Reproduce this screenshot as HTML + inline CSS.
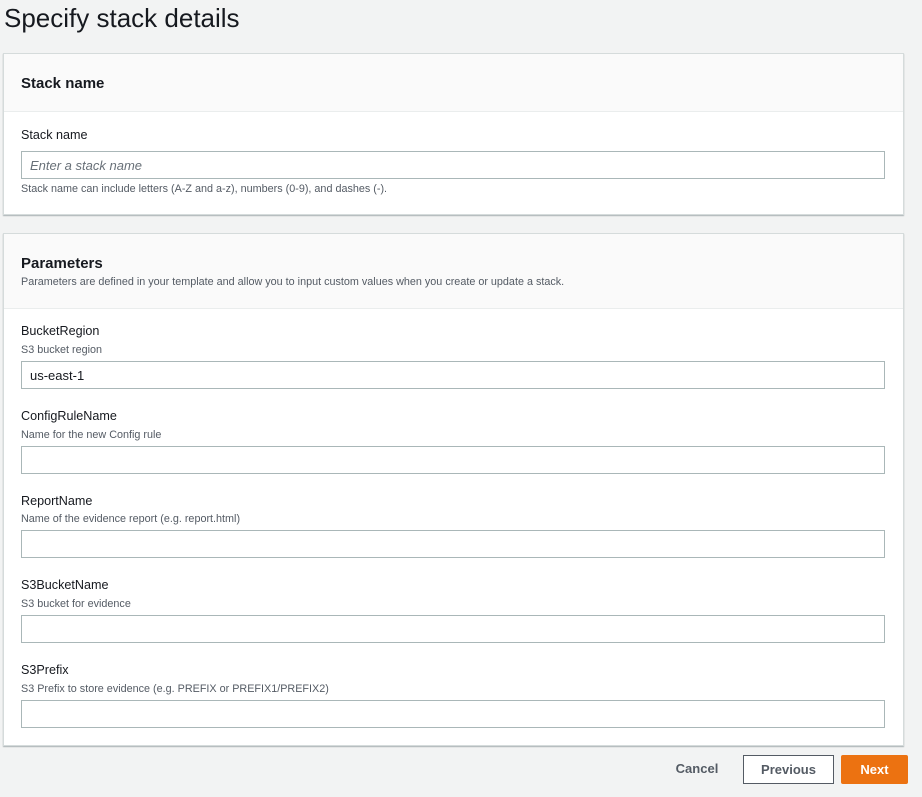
<!DOCTYPE html>
<html><head><style>
*{box-sizing:border-box;margin:0;padding:0}
body{width:922px;height:797px;background:#f2f3f3;font-family:"Liberation Sans",Arial,sans-serif;color:#16191f;position:relative;overflow:hidden}
h1{position:absolute;left:4px;top:3px;font-size:26px;font-weight:400;color:#16191f}
.panel{position:absolute;left:3px;width:901px;background:#fff;border:1px solid #d5dbdb;box-shadow:0 1px 1px rgba(0,28,36,.3)}
.hd{background:#fafafa;border-bottom:1px solid #eaeded}
.t{font-size:15px;font-weight:700;position:absolute;left:18px}
.lbl{position:absolute;left:21px;font-size:12.6px;color:#16191f}
.desc{position:absolute;left:21px;font-size:10.8px;color:#545b64}
.inp{position:absolute;left:21px;width:864px;height:28px;border:1px solid #aab7b8;background:#fff;font-size:13px;padding:6px 8px}
.btn{position:absolute;top:755px;height:29px;font-size:13px;font-weight:700;text-align:center;line-height:27px}
</style></head><body>
<h1>Specify stack details</h1>
<div class="panel" style="top:53px;height:162px"><div class="hd" style="height:58px"></div></div>
<div class="t" style="left:21px;top:75px">Stack name</div>
<div class="lbl" style="top:128px">Stack name</div>
<div class="inp" style="top:151px;color:#687078;font-style:italic">Enter a stack name</div>
<div class="desc" style="top:183px">Stack name can include letters (A-Z and a-z), numbers (0-9), and dashes (-).</div>

<div class="panel" style="top:233px;height:513px"><div class="hd" style="height:75px"></div></div>
<div class="t" style="left:21px;top:255px">Parameters</div>
<div class="desc" style="top:276px">Parameters are defined in your template and allow you to input custom values when you create or update a stack.</div>

<div class="lbl" style="top:324px">BucketRegion</div>
<div class="desc" style="top:344px">S3 bucket region</div>
<div class="inp" style="top:361px">us-east-1</div>

<div class="lbl" style="top:409px">ConfigRuleName</div>
<div class="desc" style="top:429px">Name for the new Config rule</div>
<div class="inp" style="top:446px"></div>

<div class="lbl" style="top:494px">ReportName</div>
<div class="desc" style="top:513px">Name of the evidence report (e.g. report.html)</div>
<div class="inp" style="top:530px"></div>

<div class="lbl" style="top:578px">S3BucketName</div>
<div class="desc" style="top:598px">S3 bucket for evidence</div>
<div class="inp" style="top:615px"></div>

<div class="lbl" style="top:663px">S3Prefix</div>
<div class="desc" style="top:683px">S3 Prefix to store evidence (e.g. PREFIX or PREFIX1/PREFIX2)</div>
<div class="inp" style="top:700px"></div>

<div class="btn" style="left:668px;width:58px;color:#545b64">Cancel</div>
<div class="btn" style="left:743px;width:91px;border:1px solid #545b64;background:#fff;color:#545b64">Previous</div>
<div class="btn" style="left:841px;width:67px;background:#ec7211;color:#fff;border-radius:2px;line-height:29px">Next</div>
</body></html>
